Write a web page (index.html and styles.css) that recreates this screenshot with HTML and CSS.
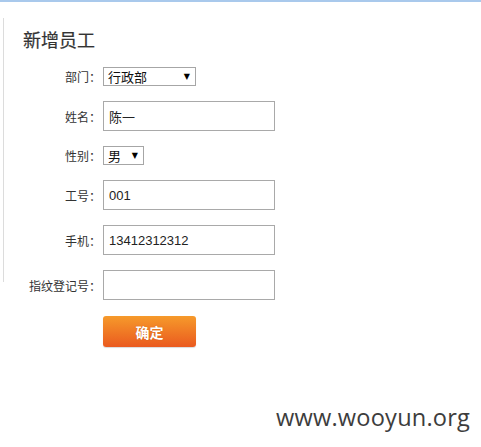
FILE: index.html
```html
<!DOCTYPE html>
<html lang="zh">
<head>
<meta charset="utf-8">
<link rel="stylesheet" href="styles.css">
</head>
<body>
<div class="topbar"></div>
<div class="panel">
  <h1 class="title">新增员工</h1>
  <form class="form">
    <div class="row">
      <label class="label">部门：</label>
      <span class="sel sel-dept"><span class="sel-text">行政部</span><span class="arrow">▼</span></span>
    </div>
    <div class="row">
      <label class="label">姓名：</label>
      <input class="inp" type="text" value="陈一">
    </div>
    <div class="row">
      <label class="label">性别：</label>
      <span class="sel sel-sex"><span class="sel-text">男</span><span class="arrow">▼</span></span>
    </div>
    <div class="row">
      <label class="label">工号：</label>
      <input class="inp" type="text" value="001">
    </div>
    <div class="row">
      <label class="label">手机：</label>
      <input class="inp" type="text" value="13412312312">
    </div>
    <div class="row">
      <label class="label">指纹登记号：</label>
      <input class="inp" type="text" value="">
    </div>
    <div class="row btn-row">
      <span class="label"></span>
      <button class="btn" type="button">确定</button>
    </div>
  </form>
</div>
<div class="watermark">www.wooyun.org</div>
</body>
</html>
```
FILE: styles.css
```css
html, body {
  margin: 0;
  padding: 0;
  background: #fff;
}
body {
  width: 481px;
  height: 447px;
  position: relative;
  overflow: hidden;
  font-family: "Liberation Sans", "Noto Sans CJK SC", sans-serif;
  color: #333;
}
.topbar {
  height: 2px;
  background: #a9c9ec;
}
.panel {
  margin: 16px 0 0 3px;
  border-left: 1px solid #dcdcdc;
  height: 254px;
  padding-left: 19px;
  padding-top: 10px;
}
.title {
  margin: 0;
  font-size: 18px;
  font-weight: normal;
  line-height: 22px;
  color: #333;
  font-family: "Noto Sans CJK SC", sans-serif;
  -webkit-text-stroke: 0.2px #333;
}
.form {
  margin-top: 17px;
  margin-left: -22px;
  display: flex;
  flex-direction: column;
  gap: 15px;
}
.row {
  display: flex;
  align-items: center;
}
.label {
  width: 100px;
  text-align: right;
  font-size: 12px;
  color: #333;
  font-family: "Noto Sans CJK SC", sans-serif;
  flex: none;
  margin-right: 2px;
}
.sel {
  display: inline-flex;
  align-items: center;
  justify-content: space-between;
  box-sizing: border-box;
  height: 19px;
  border: 1px solid #a6a6a6;
  padding: 0 5px 0 4px;
  font-size: 13px;
  color: #111;
  font-family: "Noto Sans CJK SC", sans-serif;
}
.sel-dept { width: 93px; }
.sel-sex { width: 41px; }
.arrow {
  font-size: 8px;
  color: #000;
  font-family: "DejaVu Sans", sans-serif;
}
.inp {
  box-sizing: border-box;
  width: 172px;
  height: 30px;
  border: 1px solid #a9a9a9;
  padding: 0 5px 0 5px;
  font-size: 13px;
  font-family: "Liberation Sans", "Noto Sans CJK SC", sans-serif;
  color: #222;
  margin: 0;
  outline: none;
}
.btn-row {
  margin-top: 1px;
}
.btn {
  width: 93px;
  height: 31px;
  border: none;
  border-radius: 3px;
  background: linear-gradient(#f69a2b, #ea5a1f);
  color: #fff;
  font-size: 14px;
  font-weight: bold;
  font-family: "Noto Sans CJK SC", sans-serif;
  text-shadow: 0 0 1px rgba(150, 60, 0, 0.5);
  box-shadow: 0 1px 1px rgba(0, 0, 0, 0.15);
  padding: 0;
}
.watermark {
  position: absolute;
  left: 276px;
  top: 401px;
  font-family: "Open Sans", sans-serif;
  font-size: 23.6px;
  color: #3d3d3d;
  letter-spacing: 0.2px;
}
```
